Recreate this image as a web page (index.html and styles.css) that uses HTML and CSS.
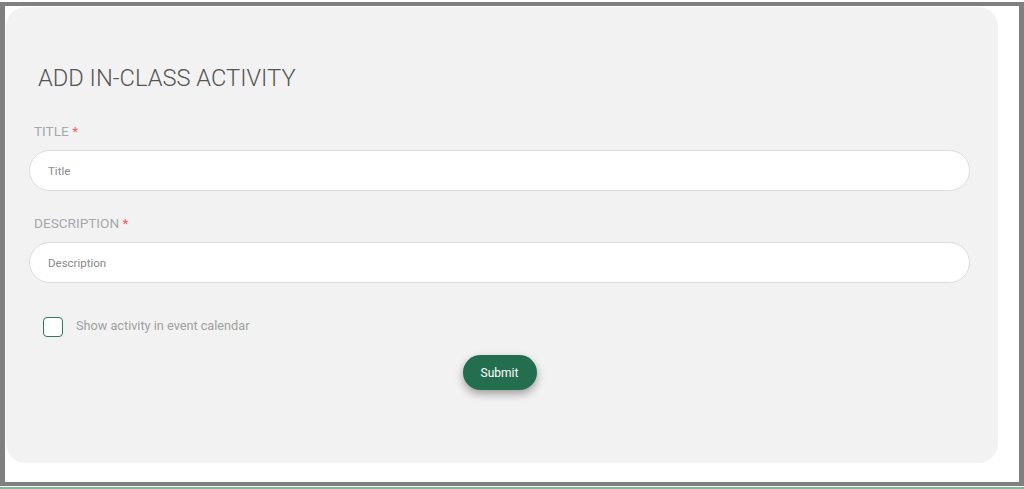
FILE: index.html
```html
<!DOCTYPE html>
<html lang="en">
<head>
    <meta charset="UTF-8">
    <meta name="viewport" content="width=device-width, initial-scale=1.0">
    <title>Add In-Class Activity</title>
    <link rel="stylesheet" href="styles.css">
</head>
<body>
    <div class="frame">
        <div class="card">
            <h1>ADD IN-CLASS ACTIVITY</h1>
            <form id="activityForm">
                <label for="title" class="field-label">TITLE <span class="req">*</span></label>
                <input type="text" id="title" name="title" placeholder="Title" required>

                <label for="description" class="field-label">DESCRIPTION <span class="req">*</span></label>
                <input type="text" id="description" name="description" placeholder="Description" required>

                <label class="check-row">
                    <input type="checkbox" id="showInCalendar" name="showInCalendar">
                    <span>Show activity in event calendar</span>
                </label>

                <div class="actions">
                    <button type="submit">Submit</button>
                </div>
            </form>
        </div>
    </div>
    <div class="bottom-line"></div>
</body>
</html>
```

FILE: styles.css
```css
/* General body styling */
body {
    margin: 0;
    background: #fff;
    font-family: Roboto, "Liberation Sans", sans-serif;
}

/* Outer grey frame */
.frame {
    box-sizing: border-box;
    height: 484px;
    margin-top: 2px;
    border: 5px solid #808080;
    border-top-width: 4px;
    border-bottom-width: 4px;
    padding: 1px 21px 0 1px;
}

.bottom-line {
    height: 2px;
    margin-top: 1px;
    background: #7dbb96;
}

/* Main card */
.card {
    box-sizing: border-box;
    height: 456px;
    background: #f2f2f2;
    border-radius: 20px;
    padding: 57px 28px 0 23px;
}

h1 {
    margin: 0 0 31px 9px;
    font-size: 23.7px;
    line-height: 28px;
    font-weight: 300;
    color: #555;
}

/* Form fields */
.field-label {
    display: block;
    margin: 0 0 11px 5px;
    font-size: 13.6px;
    line-height: 16px;
    color: #a6a8ad;
}

.req {
    color: #f25c5c;
}

input[type="text"] {
    display: block;
    box-sizing: border-box;
    width: 100%;
    height: 41px;
    margin-bottom: 24px;
    padding: 0 18px;
    border: 1px solid #dcdcdc;
    border-radius: 21px;
    background: #fff;
    font-family: inherit;
    font-size: 11.5px;
    color: #555;
    outline: none;
}

input[type="text"]::placeholder {
    color: #8a8a8a;
}

/* Checkbox row */
.check-row {
    display: flex;
    align-items: center;
    gap: 13px;
    margin: 34px 0 0 14px;
    font-size: 12.7px;
    color: #a0a0a0;
}

.check-row span {
    margin-top: -3px;
}

.check-row input[type="checkbox"] {
    appearance: none;
    width: 20px;
    height: 20px;
    margin: 0;
    border: 1.5px solid #2e7b59;
    border-radius: 4px;
    background: #fff;
    box-sizing: border-box;
}

/* Submit button */
.actions {
    display: flex;
    justify-content: center;
    margin-top: 18px;
}

button {
    width: 74px;
    height: 35px;
    border: none;
    border-radius: 18px;
    background: #236e4e;
    color: #fff;
    font-family: inherit;
    font-size: 12px;
    font-weight: 400;
    box-shadow: 0 4px 8px rgba(0, 0, 0, 0.35);
    cursor: pointer;
}
```
